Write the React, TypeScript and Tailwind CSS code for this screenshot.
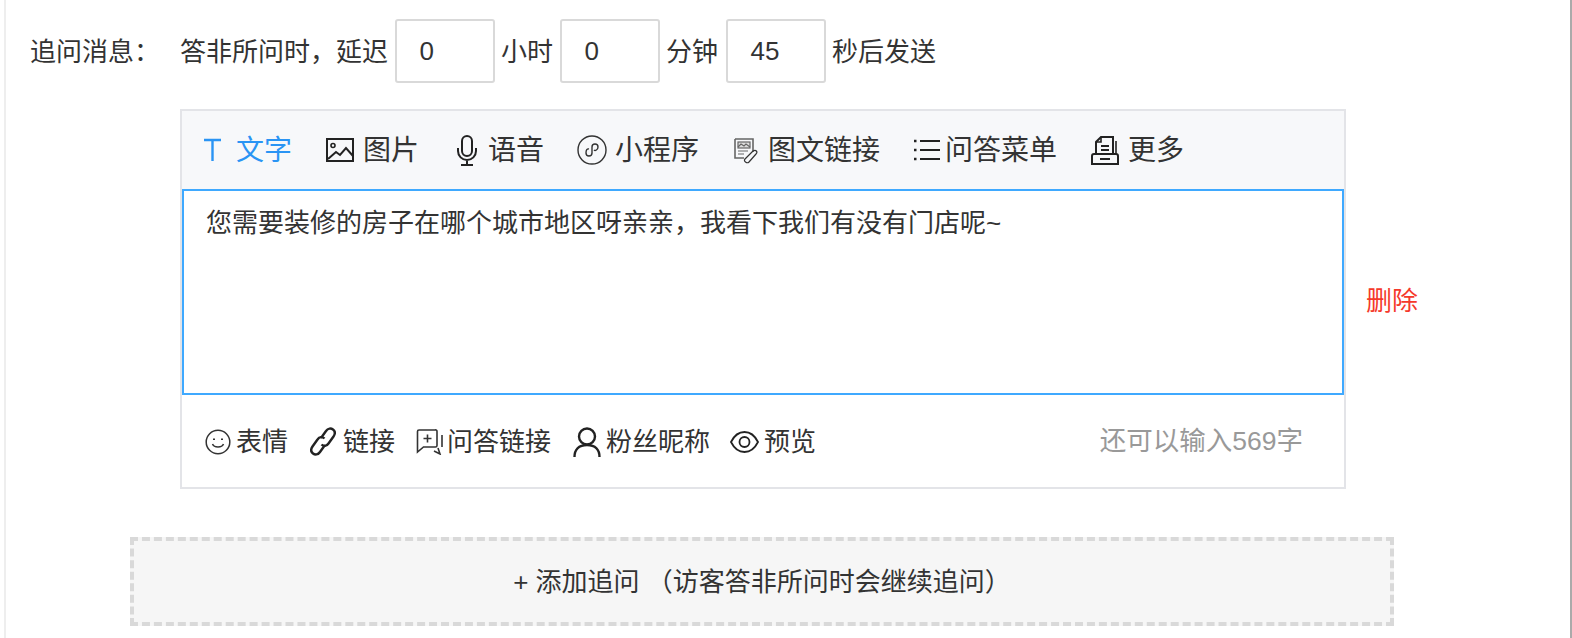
import type { ReactNode } from "react"

const FONT = "font-['Liberation_Sans','Noto_Sans_CJK_SC',sans-serif]"

function IconImage() {
  return (
    <svg width="28" height="24" viewBox="0 0 28 24" fill="none" stroke="#222" strokeWidth="2">
      <rect x="1" y="1" width="26" height="22" />
      <circle cx="7" cy="7.500" r="2" strokeWidth="1.600" />
      <path d="M2 21l8-7 4 3 6-7 7 8" />
    </svg>
  )
}

function IconMic() {
  return (
    <svg width="20" height="31" viewBox="0 0 20 31" fill="none" stroke="#222" strokeWidth="2">
      <rect x="5" y="1" width="10" height="20" rx="5" />
      <path d="M1 13v3a9 9 0 0 0 18 0v-3M10 25v5M4 30h12" />
    </svg>
  )
}

function IconMiniProgram() {
  return (
    <svg width="30" height="30" viewBox="0 0 30 30" fill="none" stroke="#333" strokeWidth="1.400">
      <circle cx="15" cy="15" r="14" />
      <path d="M9 18c0 4 6 4 6 0v-6c0-4 6-4 6 0 0 3-3 4-4 3M12 14c-2-.5-3 1-3 4" />
    </svg>
  )
}

function IconArticle() {
  return (
    <svg width="25" height="27" viewBox="0 0 25 27" fill="none" stroke="#666" strokeWidth="1.200">
      <path d="M2 2h18v13M2 2v19h9" strokeWidth="1.600" />
      <rect x="5" y="5" width="12" height="6" fill="#dddddd" />
      <path d="M5 10l3-3 3 2 2-2 4 3M5 14h10M5 17h6" />
      <path d="M12 22l8-8c3-2 5 1 3 3l-7 8c-2 2-6-1-4-3z" stroke="#333" />
    </svg>
  )
}

function IconList() {
  return (
    <svg width="26" height="24" viewBox="0 0 26 24" fill="none" stroke="#222" strokeWidth="2">
      <path d="M6 3h20M6 12h20M6 21h20" />
      <path d="M0 3h2.500M0 12h2.500M0 21h2.500" strokeWidth="2.600" />
    </svg>
  )
}

function IconMore() {
  return (
    <svg width="28" height="30" viewBox="0 0 28 30" fill="none" stroke="#222" strokeWidth="2">
      <path d="M5 19V7l5-5h12v17" />
      <path d="M10 2v5H5M25 6v13" strokeWidth="1.600" />
      <path d="M10 11h8M10 15h8" />
      <path d="M3 19h22a2 2 0 0 1 2 2v8H1v-8a2 2 0 0 1 2-2z" />
      <path d="M9 24h10" />
    </svg>
  )
}

function IconSmile() {
  return (
    <svg width="26" height="26" viewBox="0 0 26 26" fill="none" stroke="#333" strokeWidth="1.500">
      <circle cx="13" cy="13" r="11.800" />
      <path d="M7.500 15c1.500 4 9.500 4 11 0" />
      <path d="M9 9.500v1.500M17 9.500v1.500" strokeWidth="2" />
    </svg>
  )
}

function IconLink() {
  return (
    <svg width="26" height="31" viewBox="0 0 26 31" fill="none" stroke="#222" strokeWidth="2.400">
      <path d="M11 12l5-7c2-3 5-3 7-1.500s2.500 4 .5 7l-5 7c-2 3-5 3-7 1" />
      <path d="M15 19l-5 7c-2 3-5 3-7 1.500s-2.500-4-.5-7l5-7c2-3 5-3 7-1" />
    </svg>
  )
}

function IconComment() {
  return (
    <svg width="27" height="27" viewBox="0 0 27 27" fill="none" stroke="#333" strokeWidth="1.600">
      <path d="M19 2H3a1.500 1.500 0 0 0-1.500 1.500V24l6-5h12a1.500 1.500 0 0 0 1.500-1.500V3.500A1.500 1.500 0 0 0 19 2z" />
      <path d="M11.500 6.500v8M7.500 10.500h8" />
      <path d="M26 7v12M18 23l6 3-2-6" />
    </svg>
  )
}

function IconUser() {
  return (
    <svg width="28" height="30" viewBox="0 0 28 30" fill="none" stroke="#222" strokeWidth="2.400">
      <circle cx="14" cy="9.500" r="8" />
      <path d="M1.500 30c0-7 4-12 12.500-12s12.500 5 12.500 12" />
    </svg>
  )
}

function IconEye() {
  return (
    <svg width="29" height="22" viewBox="0 0 29 22" fill="none" stroke="#222" strokeWidth="1.800">
      <path d="M1 11c3-6 8-10 13.500-10S25 5 28 11c-3 6-8 10-13.500 10S4 17 1 11z" />
      <circle cx="14.500" cy="11" r="5" />
    </svg>
  )
}

function TimeBox({ value }: { value: string }) {
  return (
    <div className="flex h-[64px] w-[100px] items-center rounded-[3px] border-2 border-[#d9d9d9] pl-[23px] pt-[1px]">
      {value}
    </div>
  )
}

function Tool({ icon, label, active, className }: { icon: ReactNode; label: string; active?: boolean; className: string }) {
  return (
    <div className={`flex items-center ${className} ${active ? "text-[#2a94f4]" : "text-[#333]"}`}>
      {icon}
      <span className="pt-[1px]">{label}</span>
    </div>
  )
}

function Action({ icon, label, className }: { icon: ReactNode; label: string; className: string }) {
  return (
    <div className={`flex items-center ${className}`}>
      {icon}
      <span className="pt-[1px]">{label}</span>
    </div>
  )
}

export default function App() {
  return (
    <div className={`${FONT} h-[638px] w-[1572px] overflow-hidden bg-white pl-[4px] text-[26px] text-[#333]`}>
      <div className="h-full border-l-2 border-r-2 border-l-[#eeeeee] border-r-[#aaaaaa] pt-[19px]">
        <div className="flex items-center">
          <div className="w-[174px] pl-[24px] pt-[2px]">追问消息：</div>
          <div className="flex items-center gap-[6.500px]">
            <span className="pt-[2px]">答非所问时，延迟</span>
            <TimeBox value="0" />
            <span className="pt-[2px]">小时</span>
            <TimeBox value="0" />
            <span className="pt-[2px] pr-[1px]">分钟</span>
            <TimeBox value="45" />
            <span className="pt-[2px]">秒后发送</span>
          </div>
        </div>

        <div className="mt-[26px] ml-[174px] flex items-center">
          <div className="h-[380px] w-[1166px] border-2 border-[#e3e4e8]">
            <div className="flex h-[78px] items-center gap-[34px] bg-[#f7f8fa] pl-[22px] text-[28px]">
              <Tool
                active
                className="gap-[15px]"
                label="文字"
                icon={
                  <svg width="17" height="24" viewBox="0 0 17 24" fill="none" stroke="#2a94f4" strokeWidth="2.400">
                    <path d="M0 2h17M8.500 2v21" />
                  </svg>
                }
              />
              <Tool className="gap-[9px]" icon={<IconImage />} label="图片" />
              <Tool className="ml-[4px] gap-[11px]" icon={<IconMic />} label="语音" />
              <Tool className="-ml-[1px] gap-[8px]" icon={<IconMiniProgram />} label="小程序" />
              <Tool className="gap-[10px]" icon={<IconArticle />} label="图文链接" />
              <Tool className="gap-[5px]" icon={<IconList />} label="问答菜单" />
              <Tool className="gap-[9px]" icon={<IconMore />} label="更多" />
            </div>
            <div className="h-[206px] border-2 border-[#3fa9ff] px-[22px] py-[13px]">
              您需要装修的房子在哪个城市地区呀亲亲，我看下我们有没有门店呢~
            </div>
            <div className="flex h-[92px] items-center gap-[22px] pl-[23px] pr-[41px] pt-[1px]">
              <Action className="gap-[5px]" icon={<IconSmile />} label="表情" />
              <Action className="gap-[7px]" icon={<IconLink />} label="链接" />
              <Action className="-ml-[1px] gap-[4px]" icon={<IconComment />} label="问答链接" />
              <Action className="gap-[5px]" icon={<IconUser />} label="粉丝昵称" />
              <Action className="-ml-[2px] gap-[5px]" icon={<IconEye />} label="预览" />
              <span className="ml-auto text-[26.500px] text-[#999999]">还可以输入569字</span>
            </div>
          </div>
          <div className="ml-[20px] mt-[5px] text-[#f5392b]">删除</div>
        </div>

        <div className="mt-[48px] ml-[124px] flex h-[89px] w-[1264px] items-center justify-center border-4 border-dashed border-[#d9d9d9] bg-[#f6f6f6] pt-[1px]">
          + 添加追问 （访客答非所问时会继续追问）
        </div>
      </div>
    </div>
  )
}
